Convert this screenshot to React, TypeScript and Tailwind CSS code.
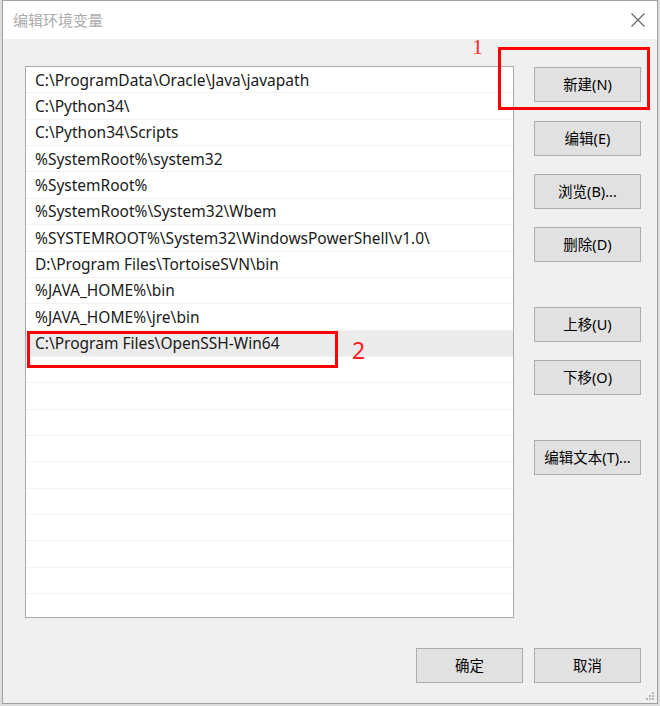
import React from 'react';

const paths = [
  'C:\\ProgramData\\Oracle\\Java\\javapath',
  'C:\\Python34\\',
  'C:\\Python34\\Scripts',
  '%SystemRoot%\\system32',
  '%SystemRoot%',
  '%SystemRoot%\\System32\\Wbem',
  '%SYSTEMROOT%\\System32\\WindowsPowerShell\\v1.0\\',
  'D:\\Program Files\\TortoiseSVN\\bin',
  '%JAVA_HOME%\\bin',
  '%JAVA_HOME%\\jre\\bin',
  'C:\\Program Files\\OpenSSH-Win64',
];

const font = { fontFamily: '"Noto Sans", "Noto Sans CJK SC", sans-serif' };

const Button: React.FC<{ label: string; className?: string }> = ({ label, className = '' }) => (
  <div
    className={`w-[107px] h-[35px] shrink-0 flex items-center justify-center bg-[#e1e1e1] border border-[#adadad] text-[14.5px] text-black ${className}`}
  >
    {label}
  </div>
);

const App: React.FC = () => {
  const rows = Array.from({ length: 21 }, (_, i) => paths[i] ?? '');

  return (
    <div className="w-[660px] h-[706px] bg-[#dcdcdc] overflow-hidden" style={font}>
      <div className="relative ml-[2px] w-[656px] h-[704px] bg-[#f0f0f0] border border-[#a0a0a0] flex flex-col">
        {/* title bar */}
        <div className="h-[38px] shrink-0 bg-white flex items-center justify-between pl-[10px] pr-[10px]">
          <span className="text-[15px] text-[#ababab]">编辑环境变量</span>
          <svg width="16" height="16" viewBox="0 0 16 16" className="mr-[1px]">
            <path d="M1.5 1.5 L14.5 14.5 M14.5 1.5 L1.5 14.5" stroke="#666" strokeWidth="1.2" fill="none" />
          </svg>
        </div>

        <div className="flex pt-[27px] pl-[22px]">
          {/* list */}
          <div className="w-[489px] h-[552px] bg-white border border-[#a5a8ad] overflow-hidden">
            {rows.map((p, i) => (
              <div
                key={i}
                className={`h-[26.36px] flex items-center pl-[9px] pt-[1px] text-[15.5px] text-[#1a1a1a] border-b border-[#f2f2f2] ${
                  i === 10 ? 'bg-[#ebebeb]' : ''
                }`}
              >
                {p}
              </div>
            ))}
          </div>

          {/* side buttons */}
          <div className="flex flex-col ml-[20px] pt-[1px]">
            <Button label="新建(N)" />
            <Button label="编辑(E)" className="mt-[19px]" />
            <Button label="浏览(B)..." className="mt-[18px]" />
            <Button label="删除(D)" className="mt-[18px]" />
            <Button label="上移(U)" className="mt-[45px]" />
            <Button label="下移(O)" className="mt-[18px]" />
            <Button label="编辑文本(T)..." className="mt-[45px]" />
          </div>
        </div>

        {/* bottom buttons */}
        <div className="flex justify-end gap-[11px] mt-[30px] pr-[16px]">
          <Button label="确定" />
          <Button label="取消" />
        </div>

        {/* resize grip */}
        <svg width="10" height="10" viewBox="0 0 10 10" className="absolute right-[3px] bottom-[3px]">
          {[
            [8, 0],
            [5, 3],
            [8, 3],
            [2, 6],
            [5, 6],
            [8, 6],
          ].map(([x, y], i) => (
            <rect key={i} x={x} y={y + 2} width="2" height="2" fill="#b8b8b8" />
          ))}
        </svg>

        {/* annotations */}
        <div className="absolute left-[495px] top-[46px] w-[152px] h-[63px] border-[3px] border-[#ff0000]" />
        <span
          className="absolute left-[469px] top-[35px] text-[22px] leading-none text-[#ff3030]"
          style={{ fontFamily: '"Liberation Serif", serif' }}
        >
          1
        </span>
        <div className="absolute left-[24px] top-[330px] w-[311px] h-[37px] border-[3px] border-[#ff0000]" />
        <span className="absolute left-[349px] top-[338px] text-[23px] leading-none text-[#ff2020]">2</span>
      </div>
    </div>
  );
};

export default App;
